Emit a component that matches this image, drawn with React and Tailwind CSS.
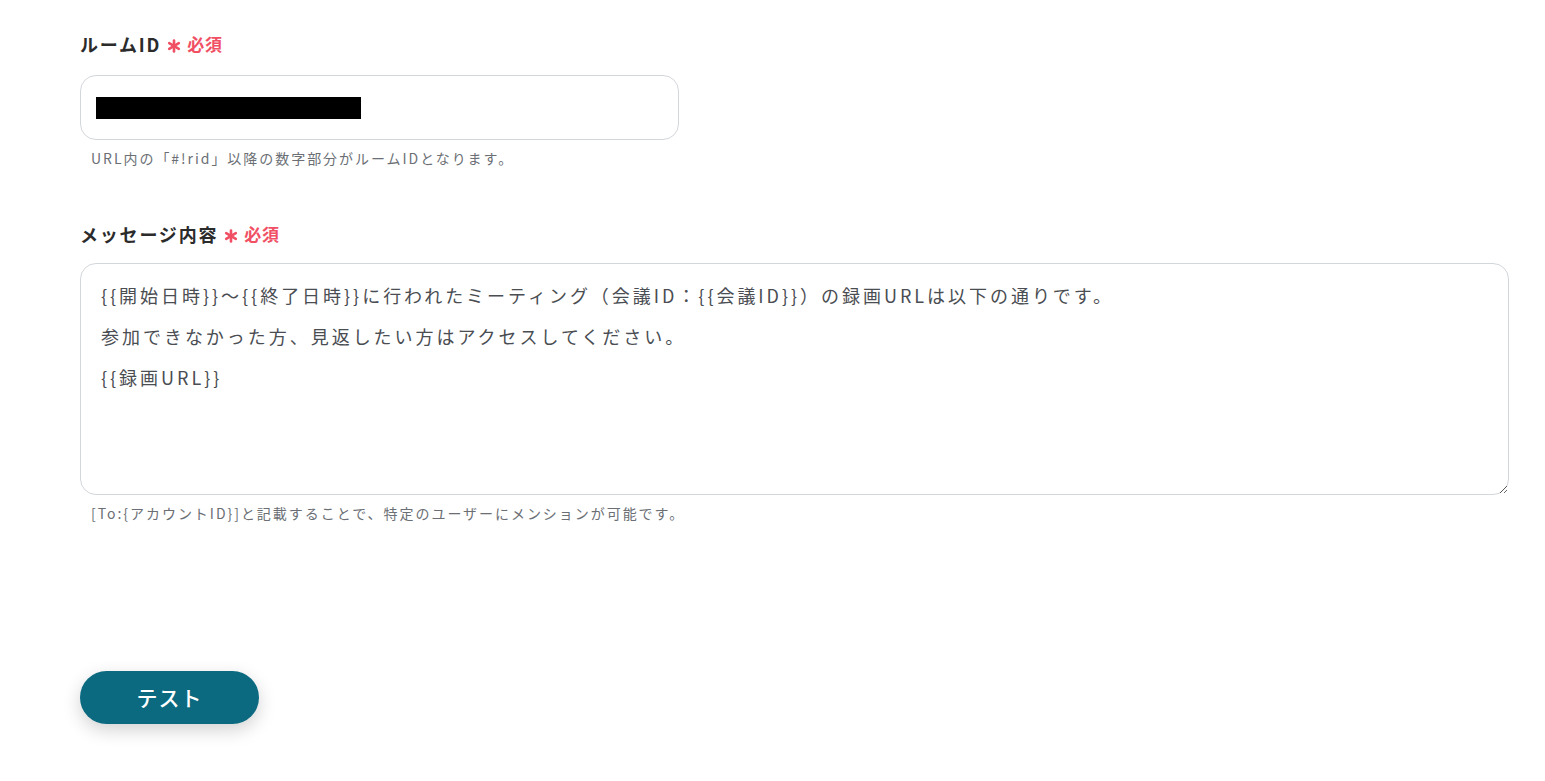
import React from 'react';

const font = { fontFamily: '"Noto Sans CJK JP", "Noto Sans", sans-serif' };

function Asterisk() {
  return (
    <svg width="14" height="14" viewBox="0 0 14 14" className="mt-[5px]">
      <g stroke="#f04f64" strokeWidth="2.6" strokeLinecap="round">
        <line x1="7" y1="1.5" x2="7" y2="12.5" />
        <line x1="2.2" y1="4.2" x2="11.8" y2="9.8" />
        <line x1="2.2" y1="9.8" x2="11.8" y2="4.2" />
      </g>
    </svg>
  );
}

function Label({ children }) {
  return (
    <div className="flex items-center gap-[6px]">
      <span className="text-[18px] font-bold text-[#2b2b2b] leading-none tracking-[0.1em]">{children}</span>
      <Asterisk />
      <span className="text-[#f04f64] text-[17px] font-bold leading-none tracking-[0.05em]">必須</span>
    </div>
  );
}

export default function App() {
  const message =
    '{{開始日時}}〜{{終了日時}}に行われたミーティング（会議ID：{{会議ID}}）の録画URLは以下の通りです。\n参加できなかった方、見返したい方はアクセスしてください。\n{{録画URL}}';

  return (
    <div className="min-h-screen bg-white pl-[80px] pr-[36px] pt-[34px]" style={font}>
      {/* Room ID */}
      <Label>ルームID</Label>
      <div className="mt-[22px] w-[599px] h-[65px] rounded-[16px] border border-[#d3d6db] flex items-center px-[15px]">
        <div className="w-[265px] h-[22px] bg-black" />
      </div>
      <p className="mt-[8px] pl-[11px] text-[14px] text-[#6b6f75] tracking-[0.14em]">URL内の「#!rid」以降の数字部分がルームIDとなります。</p>

      {/* Message */}
      <div className="mt-[55px]">
        <Label>メッセージ内容</Label>
      </div>
      <textarea
        defaultValue={message}
        className="mt-[20px] block w-full h-[232px] rounded-[16px] border border-[#d3d6db] px-[20px] pt-[11px] text-[18px] leading-[41px] tracking-[0.165em] text-[#4a4d52] outline-none resize-y"
        style={font}
      />
      <p className="mt-[8px] pl-[11px] text-[14px] text-[#6b6f75] tracking-[0.14em]">[To:{'{'}アカウントID{'}'}]と記載することで、特定のユーザーにメンションが可能です。</p>

      {/* Test button */}
      <button
        className="mt-[147px] w-[179px] h-[53px] rounded-full bg-[#0b6a80] text-white text-[21px] font-medium tracking-[0.05em] shadow-[0_6px_18px_rgba(0,0,0,0.18)]"
        style={font}
      >
        テスト
      </button>
    </div>
  );
}
